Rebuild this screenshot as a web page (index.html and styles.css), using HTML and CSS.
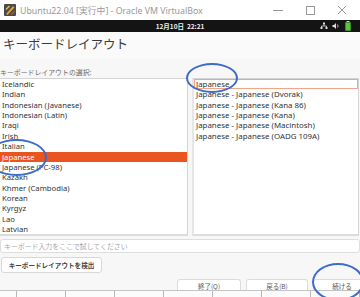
FILE: index.html
```html
<!DOCTYPE html>
<html lang="ja">
<head>
<meta charset="utf-8">
<title>Ubuntu22.04</title>
<link rel="stylesheet" href="styles.css">
</head>
<body>
<div class="screen">
  <div class="titlebar">
    <svg class="vbox" width="12" height="12" viewBox="0 0 12 12">
      <rect x="0" y="0" width="12" height="12" rx="1" fill="#4a4a4a"/>
      <path d="M2 10 L9 2 L10.5 3.5 L3.5 11 Z" fill="#f0a020"/>
      <path d="M1.5 5 L5 1.5 L6 2.5 L2.5 6 Z" fill="#e8c040"/>
      <path d="M6.5 10.5 L10.5 6.5 L11 7.5 L7.5 11 Z" fill="#d06010"/>
    </svg>
    <span class="wintitle">Ubuntu22.04 [実行中] - Oracle VM VirtualBox</span>
    <div class="winctl">
      <span class="ctl"><svg width="12" height="12" viewBox="0 0 12 12"><path d="M1 6.5 H11" stroke="#999" stroke-width="1"/></svg></span>
      <span class="ctl"><svg width="12" height="12" viewBox="0 0 12 12"><rect x="2.5" y="2.5" width="8" height="8" fill="none" stroke="#999" stroke-width="1"/></svg></span>
      <span class="ctl"><svg width="12" height="12" viewBox="0 0 12 12"><path d="M2 2 L10 10 M10 2 L2 10" stroke="#999" stroke-width="1"/></svg></span>
    </div>
  </div>
  <div class="topbar">
    <span class="clock">12月10日&nbsp; 22:21</span>
    <div class="tray">
      <svg width="8" height="8" viewBox="0 0 8 8"><rect x="3" y="0.5" width="2" height="2" fill="#ddd"/><rect x="0.5" y="5" width="2" height="2" fill="#ddd"/><rect x="5.5" y="5" width="2" height="2" fill="#ddd"/><path d="M4 2.5 V4 M1.5 5 V4 H6.5 V5" stroke="#ddd" stroke-width="0.8" fill="none"/></svg>
      <svg width="8" height="8" viewBox="0 0 8 8"><path d="M0.5 3 H2 L4 1 V7 L2 5 H0.5 Z" fill="#ddd"/><path d="M5.5 2.5 Q6.8 4 5.5 5.5" stroke="#ddd" stroke-width="0.8" fill="none"/></svg>
      <svg width="8" height="10" viewBox="0 0 8 10"><rect x="2.5" y="0" width="3" height="1.2" fill="#ccc"/><rect x="1" y="1" width="6" height="9" rx="0.8" fill="#3a8a2a"/><rect x="2" y="2" width="4" height="7" fill="#5cc33a"/></svg>
    </div>
  </div>
  <div class="main">
    <h1 class="heading">キーボードレイアウト</h1>
    <div class="label">キーボードレイアウトの選択:</div>
    <div class="lists">
      <ul class="list left">
        <li>Icelandic</li>
        <li>Indian</li>
        <li>Indonesian (Javanese)</li>
        <li>Indonesian (Latin)</li>
        <li>Iraqi</li>
        <li>Irish</li>
        <li>Italian</li>
        <li class="sel">Japanese</li>
        <li>Japanese (PC-98)</li>
        <li>Kazakh</li>
        <li>Khmer (Cambodia)</li>
        <li>Korean</li>
        <li>Kyrgyz</li>
        <li>Lao</li>
        <li>Latvian</li>
      </ul>
      <ul class="list right">
        <li class="focus">Japanese</li>
        <li>Japanese - Japanese (Dvorak)</li>
        <li>Japanese - Japanese (Kana 86)</li>
        <li>Japanese - Japanese (Kana)</li>
        <li>Japanese - Japanese (Macintosh)</li>
        <li>Japanese - Japanese (OADG 109A)</li>
      </ul>
    </div>
    <div class="testinput">キーボード入力をここで試してください</div>
    <div class="detectrow"><button class="detect">キーボードレイアウトを検出</button></div>
    <div class="navrow">
      <button class="nav quit">終了(Q)</button>
      <button class="nav back">戻る(B)</button>
      <button class="nav next">続ける</button>
    </div>
    <div class="ticks"></div>
  </div>
  <div class="mark m1"></div>
  <div class="mark m2"></div>
  <div class="mark m3"></div>
</div>
</body>
</html>
```
FILE: styles.css
```css
* { box-sizing: border-box; }
html, body { margin: 0; padding: 0; }
body {
  width: 360px;
  height: 297px;
  overflow: hidden;
  background: #f7f7f7;
  font-family: "Noto Sans", "Noto Sans CJK JP", sans-serif;
}
.screen {
  position: relative;
  width: 360px;
  height: 297px;
  overflow: hidden;
  display: flex;
  flex-direction: column;
}
.titlebar {
  height: 20px;
  flex: none;
  background: #fff;
  display: flex;
  align-items: center;
  padding-left: 4px;
}
.vbox { flex: none; }
.wintitle {
  margin-left: 4px;
  font-family: "Noto Sans", "Noto Sans CJK JP", sans-serif;
  font-size: 8.8px;
  color: #999;
  white-space: nowrap;
}
.winctl {
  margin-left: auto;
  display: flex;
  margin-right: 2px;
}
.ctl {
  width: 32px;
  height: 20px;
  display: flex;
  align-items: center;
  justify-content: center;
}
.topbar {
  height: 12px;
  flex: none;
  background: #141414;
  position: relative;
  display: flex;
  align-items: center;
  justify-content: center;
}
.clock {
  color: #eee;
  font-family: "Noto Sans CJK JP", sans-serif;
  font-weight: bold;
  font-size: 6.5px;
  line-height: 12px;
}
.tray {
  position: absolute;
  right: 8px;
  top: 1px;
  height: 10px;
  display: flex;
  align-items: center;
  gap: 4px;
}
.main {
  flex: 1;
  display: flex;
  flex-direction: column;
  background: #f7f7f7;
}
.heading {
  margin: 0;
  height: 26px;
  padding: 2px 0 0 3px;
  font-family: "Noto Sans CJK JP", sans-serif;
  font-weight: normal;
  font-size: 12.5px;
  line-height: 20px;
  color: #3a3a3a;
  background: #fafafa;
}
.label {
  height: 20px;
  padding-top: 8px;
  font-family: "Noto Sans CJK JP", sans-serif;
  font-size: 6.9px;
  line-height: 12px;
  color: #6a6a6a;
  white-space: nowrap;
}
.lists {
  display: flex;
  gap: 4px;
  height: 158px;
  flex: none;
  padding-right: 1px;
}
.list {
  margin: 0;
  padding: 0;
  list-style: none;
  background: #fff;
  border: 1px solid #d4d4d4;
  border-bottom: 2px solid #dcdcdc;
  overflow: hidden;
}
.list.left { width: 188px; border-left: none; }
.list.right { flex: 1; border-left: 2px solid #e6e6e6; }
.list li {
  height: 10.36px;
  line-height: 10.36px;
  font-size: 7.7px;
  color: #333;
  padding-left: 2px;
  white-space: nowrap;
}
.list.right li { font-size: 7.9px; }
.list li.sel {
  background: #e95420;
  color: #fff;
}
.list li.focus {
  outline: 1px solid #f2a488;
  outline-offset: -1px;
}
.testinput {
  margin-top: 3px;
  height: 14px;
  flex: none;
  background: #fff;
  border: 1px solid #dedede;
  border-radius: 3px;
  font-family: "Noto Sans CJK JP", sans-serif;
  font-size: 6.9px;
  line-height: 12px;
  color: #a8a8a8;
  padding-left: 3px;
}
.detectrow {
  margin-top: 4px;
  padding-left: 1px;
  display: flex;
  flex: none;
}
.detect {
  width: 101px;
  height: 16px;
  background: #fff;
  border: 1px solid #d8d8d8;
  border-radius: 3px;
  font-family: "Noto Sans CJK JP", sans-serif;
  font-size: 6.6px;
  font-weight: bold;
  color: #444;
  padding: 0;
}
.navrow {
  margin-top: 6px;
  height: 11px;
  flex: none;
  display: flex;
  padding-left: 177px;
  gap: 5px;
}
.nav {
  flex: none;
  height: 12px;
  background: #fff;
  border: 1px solid #dcdcdc;
  border-bottom: none;
  border-radius: 3px 3px 0 0;
  font-family: "Noto Sans CJK JP", sans-serif;
  font-size: 6.5px;
  color: #555;
  padding: 0;
  line-height: 10px;
}
.quit { width: 64px; }
.back { width: 62px; }
.next { width: 58px; }
.ticks {
  flex: 1;
  border-top: 1px solid #c4c4c4;
  background: #fbfbfb linear-gradient(to right, transparent 16px, #b8b8b8 16px, #b8b8b8 17px, transparent 17px) 0 0 / 49px 100% repeat-x;
}
.mark {
  position: absolute;
  border: 2px solid #3d6cc6;
  border-radius: 50%;
}
.m1 { left: 186px; top: 63px; width: 52px; height: 30px; }
.m2 { left: -14px; top: 139px; width: 61px; height: 37px; }
.m3 { left: 312px; top: 263px; width: 52px; height: 38px; }
```
